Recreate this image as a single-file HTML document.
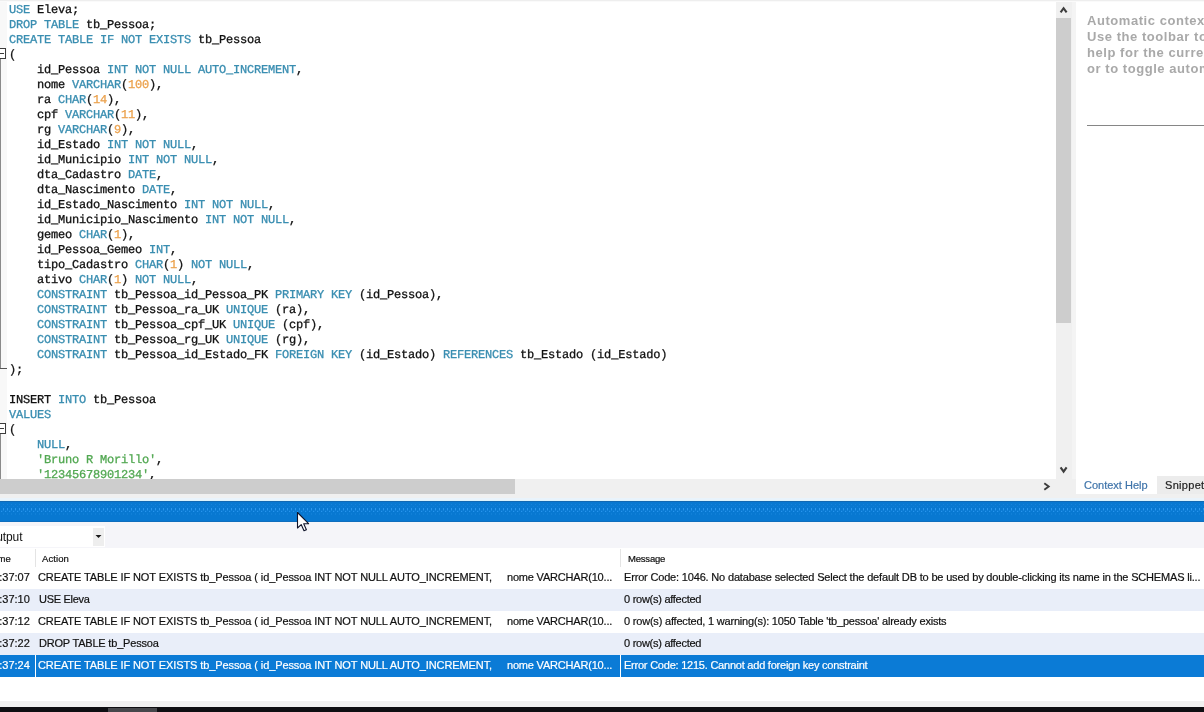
<!DOCTYPE html>
<html>
<head>
<meta charset="utf-8">
<title>MySQL Workbench</title>
<style>
html,body{margin:0;padding:0;}
body{width:1204px;height:712px;overflow:hidden;background:#fff;position:relative;font-family:"Liberation Sans",sans-serif;}
.abs{position:absolute;}
#editor{left:0;top:0;width:1056px;height:479px;background:#fff;overflow:hidden;}
#gutter{left:0;top:0;width:7px;height:479px;background:#f8f8f8;}
#topstrip{left:0;top:0;width:1204px;height:1px;background:#eeeeee;border-bottom:1px solid #fafafa;}
#code{-webkit-text-stroke:0.3px;will-change:transform;text-rendering:geometricPrecision;left:9px;top:3px;margin:0;font-family:"Liberation Mono",monospace;font-size:12px;letter-spacing:-0.2px;line-height:15px;color:#111;white-space:pre;}
.k{color:#3a8eb1;}
.n{color:#eba24e;}
.s{color:#52a852;}
#vscroll{left:1056px;top:0;width:16px;height:479px;background:#f0f0f0;}
#vscroll2{left:1072px;top:0;width:4px;height:495px;background:#f4f4f4;}
#vthumb{left:1056px;top:18px;width:15px;height:305px;background:#cdcdcd;}
#rpanel{left:1076px;top:0;width:128px;height:477px;background:#fff;overflow:hidden;}
#rtext{will-change:transform;left:11px;top:13px;font-weight:bold;font-size:13px;letter-spacing:0.55px;line-height:16px;color:#a9a9a9;white-space:pre;}
#rrule{left:11px;top:125px;width:120px;height:1px;background:#868686;}
#hscroll{left:0;top:479px;width:1076px;height:15px;background:#f0f0f0;}
#hthumb{left:0;top:479px;width:515px;height:15px;background:#cdcdcd;}
#tabs{left:1076px;top:477px;width:128px;height:18px;background:#fff;}
#tab2{left:1157px;top:476px;width:47px;height:19px;background:#ececec;}
.tabtxt{-webkit-text-stroke:0.2px;will-change:transform;font-size:11px;line-height:14px;white-space:pre;}
#under{left:0;top:494px;width:1204px;height:4px;background:#f0f0f0;}
#under2{left:0;top:498px;width:1204px;height:3px;background:#e9f3fb;}
#bluebar{left:0;top:501px;width:1204px;height:21px;background:#0878d1;border-top:1px solid #1268b2;border-bottom:1px solid #0f6ebd;box-sizing:border-box;}
#outpanel{left:0;top:522px;width:1204px;height:26px;background:#f5f5f9;}
#combo{left:0;top:526px;width:105px;height:21px;background:#fff;}
#combobtn{left:93px;top:528px;width:11px;height:18px;background:#eeeeee;}
#table{left:0;top:548px;width:1204px;height:153px;background:#fff;}
.row{left:0;width:1204px;height:22px;}
.alt{background:#e9eef9;}
.sel{background:#0b7bd6;color:#fff;}
.cell{-webkit-text-stroke:0.2px;will-change:transform;position:absolute;top:-1px;font-size:11px;letter-spacing:-0.18px;line-height:22px;white-space:pre;color:#111;}
.sel .cell{color:#fff;}
.hdr{-webkit-text-stroke:0.2px;will-change:transform;position:absolute;font-size:9.5px;line-height:12px;color:#111;white-space:pre;}
#bot1{left:0;top:701px;width:1204px;height:6px;background:#f0f0f0;}
#bot2{left:0;top:706.5px;width:1204px;height:6px;background:#0e0e12;}
#bot3{left:108px;top:708px;width:49px;height:4px;background:#46474b;}
</style>
</head>
<body>
<div id="editor" class="abs">
<div id="gutter" class="abs"></div>
<div class="abs" style="left:0;top:59px;width:1px;height:310px;background:#8a8a8a;"></div>
<div class="abs" style="left:0;top:368px;width:7px;height:1px;background:#555;"></div>
<div class="abs" style="left:-5px;top:48px;width:11px;height:11px;box-sizing:border-box;border:1px solid #3c3c3c;background:#fff;"></div>
<div class="abs" style="left:0;top:53px;width:4px;height:1px;background:#3c3c3c;"></div>
<div class="abs" style="left:0;top:434px;width:1px;height:46px;background:#8a8a8a;"></div>
<div class="abs" style="left:-5px;top:423px;width:11px;height:11px;box-sizing:border-box;border:1px solid #3c3c3c;background:#fff;"></div>
<div class="abs" style="left:0;top:428px;width:4px;height:1px;background:#3c3c3c;"></div>
<pre id="code" class="abs"><span class="k">USE</span> Eleva;
<span class="k">DROP TABLE</span> tb_Pessoa;
<span class="k">CREATE TABLE IF NOT EXISTS</span> tb_Pessoa
(
    id_Pessoa <span class="k">INT NOT NULL AUTO_INCREMENT</span>,
    nome <span class="k">VARCHAR</span>(<span class="n">100</span>),
    ra <span class="k">CHAR</span>(<span class="n">14</span>),
    cpf <span class="k">VARCHAR</span>(<span class="n">11</span>),
    rg <span class="k">VARCHAR</span>(<span class="n">9</span>),
    id_Estado <span class="k">INT NOT NULL</span>,
    id_Municipio <span class="k">INT NOT NULL</span>,
    dta_Cadastro <span class="k">DATE</span>,
    dta_Nascimento <span class="k">DATE</span>,
    id_Estado_Nascimento <span class="k">INT NOT NULL</span>,
    id_Municipio_Nascimento <span class="k">INT NOT NULL</span>,
    gemeo <span class="k">CHAR</span>(<span class="n">1</span>),
    id_Pessoa_Gemeo <span class="k">INT</span>,
    tipo_Cadastro <span class="k">CHAR</span>(<span class="n">1</span>) <span class="k">NOT NULL</span>,
    ativo <span class="k">CHAR</span>(<span class="n">1</span>) <span class="k">NOT NULL</span>,
    <span class="k">CONSTRAINT</span> tb_Pessoa_id_Pessoa_PK <span class="k">PRIMARY KEY</span> (id_Pessoa),
    <span class="k">CONSTRAINT</span> tb_Pessoa_ra_UK <span class="k">UNIQUE</span> (ra),
    <span class="k">CONSTRAINT</span> tb_Pessoa_cpf_UK <span class="k">UNIQUE</span> (cpf),
    <span class="k">CONSTRAINT</span> tb_Pessoa_rg_UK <span class="k">UNIQUE</span> (rg),
    <span class="k">CONSTRAINT</span> tb_Pessoa_id_Estado_FK <span class="k">FOREIGN KEY</span> (id_Estado) <span class="k">REFERENCES</span> tb_Estado (id_Estado)
);

INSERT <span class="k">INTO</span> tb_Pessoa
<span class="k">VALUES</span>
(
    <span class="k">NULL</span>,
    <span class="s">'Bruno R Morillo'</span>,
    <span class="s">'12345678901234'</span>,
</pre>
</div>
<div id="vscroll" class="abs"></div>
<div id="vscroll2" class="abs"></div>
<div id="vthumb" class="abs"></div>
<div id="rpanel" class="abs">
<div id="rtext" class="abs">Automatic context help is disabled.
Use the toolbar to manually get
help for the current caret position
or to toggle automatic help.</div>
<div id="rrule" class="abs"></div>
</div>
<div id="hscroll" class="abs"></div>
<div id="hthumb" class="abs"></div>
<div id="tabs" class="abs"></div>
<div id="tab2" class="abs"></div>
<div class="abs tabtxt" style="left:1084px;top:478px;color:#3f74aa;">Context Help</div>
<div class="abs tabtxt" style="left:1164.5px;top:478px;color:#222;letter-spacing:0.3px;">Snippets</div>
<div id="under" class="abs"></div>
<div id="under2" class="abs"></div>
<div id="bluebar" class="abs"></div>
<svg class="abs" style="left:0;top:501px;" width="1204" height="21"><defs><pattern id="grip" x="0" y="0" width="4" height="21" patternUnits="userSpaceOnUse"><rect x="3" y="7" width="1" height="2.4" fill="#2b97ef"/><rect x="1" y="9.8" width="1.2" height="1.2" fill="#2894ee"/><rect x="3" y="3" width="1" height="1" fill="#1583dc"/><rect x="1" y="5" width="1" height="1" fill="#1280d8"/><rect x="3" y="12.4" width="1" height="1.2" fill="#1684dd"/></pattern></defs><rect x="0" y="0" width="1204" height="21" fill="url(#grip)"/></svg>
<div class="abs" style="left:0;top:500px;width:1204px;height:1px;background:#dcf3fd;"></div>
<div class="abs" style="left:0;top:522px;width:1204px;height:1px;background:#e2f6fd;"></div>
<div id="outpanel" class="abs"></div>
<div id="combo" class="abs"></div>
<div id="combobtn" class="abs"></div>
<div class="abs" style="will-change:transform;left:-13px;top:530px;font-size:12px;letter-spacing:-0.1px;line-height:14px;color:#111;white-space:pre;">Output</div>
<div id="table" class="abs">
<div class="hdr" style="left:-10.5px;top:5px;">Time</div>
<div class="hdr" style="left:42px;top:5px;letter-spacing:0.1px;">Action</div>
<div class="hdr" style="left:628px;top:5px;letter-spacing:-0.2px;">Message</div>
<div class="abs row" style="top:19px;"><span class="cell" style="left:-12.8px;letter-spacing:0;">19:37:07</span><span class="cell" style="left:38px;letter-spacing:-0.097px;">CREATE TABLE IF NOT EXISTS tb_Pessoa ( id_Pessoa INT NOT NULL AUTO_INCREMENT,</span><span class="cell" style="left:507px;letter-spacing:-0.195px;">nome VARCHAR(10...</span><span class="cell" style="left:624px;letter-spacing:-0.175px;">Error Code: 1046. No database selected Select the default DB to be used by double-clicking its name in the SCHEMAS li...</span></div>
<div class="abs row alt" style="top:41px;"><span class="cell" style="left:-12.8px;letter-spacing:0;">19:37:10</span><span class="cell" style="left:39px;letter-spacing:-0.289px;">USE Eleva</span><span class="cell" style="left:624px;letter-spacing:-0.267px;">0 row(s) affected</span></div>
<div class="abs row" style="top:63px;"><span class="cell" style="left:-12.8px;letter-spacing:0;">19:37:12</span><span class="cell" style="left:38px;letter-spacing:-0.097px;">CREATE TABLE IF NOT EXISTS tb_Pessoa ( id_Pessoa INT NOT NULL AUTO_INCREMENT,</span><span class="cell" style="left:507px;letter-spacing:-0.195px;">nome VARCHAR(10...</span><span class="cell" style="left:624px;letter-spacing:-0.2px;">0 row(s) affected, 1 warning(s): 1050 Table 'tb_pessoa' already exists</span></div>
<div class="abs row alt" style="top:85px;"><span class="cell" style="left:-12.8px;letter-spacing:0;">19:37:22</span><span class="cell" style="left:39px;letter-spacing:-0.196px;">DROP TABLE tb_Pessoa</span><span class="cell" style="left:624px;letter-spacing:-0.267px;">0 row(s) affected</span></div>
<div class="abs row sel" style="top:107px;"><span class="cell" style="left:-12.8px;letter-spacing:0;">19:37:24</span><span class="cell" style="left:38px;letter-spacing:-0.097px;">CREATE TABLE IF NOT EXISTS tb_Pessoa ( id_Pessoa INT NOT NULL AUTO_INCREMENT,</span><span class="cell" style="left:507px;letter-spacing:-0.195px;">nome VARCHAR(10...</span><span class="cell" style="left:624px;letter-spacing:-0.227px;">Error Code: 1215. Cannot add foreign key constraint</span></div>
</div>
<svg class="abs" style="left:1056px;top:0;" width="16" height="18" viewBox="0 0 16 18"><path d="M4.6 12.4 L7.6 8.2 L10.6 12.4" fill="none" stroke="#3d3d3d" stroke-width="2.1" stroke-linejoin="miter"/></svg>
<svg class="abs" style="left:1056px;top:461px;" width="16" height="18" viewBox="0 0 16 18"><path d="M4.6 6.4 L7.6 10.6 L10.6 6.4" fill="none" stroke="#3d3d3d" stroke-width="2.1" stroke-linejoin="miter"/></svg>
<svg class="abs" style="left:1039px;top:479px;" width="16" height="15" viewBox="0 0 16 15"><path d="M5.3 4.2 L9.7 7.5 L5.3 10.8" fill="none" stroke="#3d3d3d" stroke-width="1.9" stroke-linejoin="miter"/></svg>
<svg class="abs" style="left:93px;top:527px;" width="11" height="19" viewBox="0 0 11 19"><path d="M2.5 8 L8.5 8 L5.5 11 Z" fill="#1a1a1a"/></svg>
<svg class="abs" style="left:296px;top:511px;" width="16" height="22" viewBox="0 0 16 22"><path d="M1.5 1.5 L1.5 17 L5.2 13.6 L8 19.8 L10.4 18.7 L7.7 12.7 L12.6 12.7 Z" fill="#fff" stroke="#10142a" stroke-width="1.1" stroke-linejoin="round"/></svg>
<div class="abs" style="left:35px;top:549px;width:1px;height:18px;background:#e4e4e4;"></div>
<div class="abs" style="left:620px;top:549px;width:1px;height:18px;background:#e4e4e4;"></div>
<div class="abs" style="left:35px;top:655px;width:1px;height:22px;background:#fff;"></div>
<div class="abs" style="left:620px;top:655px;width:1px;height:22px;background:#fff;"></div>
<div id="bot1" class="abs"></div>
<div id="bot2" class="abs"></div>
<div id="bot3" class="abs"></div>
<div id="topstrip" class="abs"></div>
</body>
</html>
